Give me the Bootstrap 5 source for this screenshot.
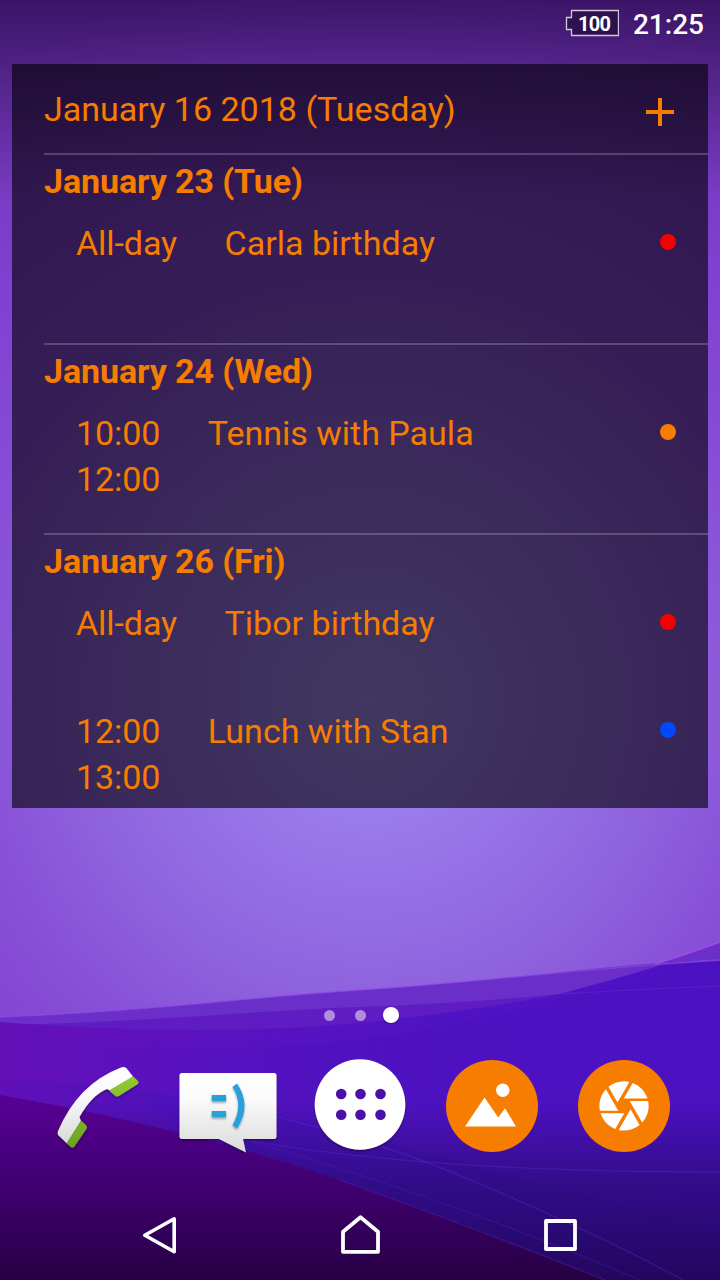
<!DOCTYPE html>
<html lang="en">
<head>
<meta charset="utf-8">
<meta name="viewport" content="width=device-width, initial-scale=1">
<title>Home screen</title>
<link href="https://cdn.jsdelivr.net/npm/bootstrap@5.3.0/dist/css/bootstrap.min.css" rel="stylesheet">
<style>
  body { font-family: Roboto, sans-serif; background: #3f1768; }
  .phone { width: 720px; height: 1280px; }
  .wallpaper { z-index: 0; }
  .front { z-index: 1; }
  .statusbar { height: 48px; padding-right: 16px; gap: 14px; }
  .battery { width: 54px; height: 28px; margin-top: -2px; }
  .clock { font-size: 28px; font-weight: 500; line-height: 48px; padding-top: 2px; }
  .agenda { margin: 16px 12px 0; height: 744px; background: rgba(0,0,0,.6); color: #f77d00; font-size: 34px; }
  .agenda-head { height: 89px; padding: 3px 34px 0 32px; }
  .agenda-head span { line-height: 86px; height: 88px; letter-spacing: .02px; }
  .agenda-head svg { margin-top: 3px; }
  .day { margin-left: 32px; border-top: 2px solid rgba(255,255,255,.2); height: 190px; }
  .day:last-child { height: auto; }
  .day-name { font-size: 34px; font-weight: 700; line-height: 52px; height: 54px; margin: 0; letter-spacing: -.09px; }
  .event { height: 108px; padding: 11px 32px 0 32px; gap: 47.5px; line-height: 46px; }
  .event > span:first-child { letter-spacing: -.08px; }
  .marker { width: 16px; height: 16px; margin-top: 14px; }
  .pager { height: 16px; margin-top: 199px; gap: 20px; padding-left: 2px; }
  .page-dot { width: 11px; height: 11px; background: rgba(255,255,255,.5); }
  .page-dot.on { width: 16px; height: 16px; background: #fff; margin-left: -3px; box-shadow: 0 1px 2px rgba(0,0,0,.3); }
  .dock { height: 120px; margin-top: 23px; padding: 0 30px; }
  .dock svg { width: 132px; height: 120px; }
  .navkeys { height: 90px; padding: 0 60px; margin-top: 24px; }
  .navkeys svg { width: 200px; height: 90px; }
</style>
</head>
<body>
<div class="phone position-relative overflow-hidden">
  <svg class="wallpaper position-absolute top-0 start-0" width="720" height="1280" viewBox="0 0 720 1280" aria-hidden="true">
    <defs>
      <radialGradient id="glow" gradientUnits="userSpaceOnUse" cx="370" cy="700" r="740">
        <stop offset="0" stop-color="#a28cf0"/><stop offset=".2" stop-color="#9877e8"/>
        <stop offset=".4" stop-color="#8f62de"/><stop offset=".57" stop-color="#864dd6"/><stop offset=".75" stop-color="#8040d0"/><stop offset="1" stop-color="#6e35b2"/>
      </radialGradient>
      <linearGradient id="shade" x1="0" y1="0" x2="0" y2="1">
        <stop offset="0" stop-color="#1c0038" stop-opacity=".62"/><stop offset=".35" stop-color="#1c0038" stop-opacity=".36"/><stop offset="1" stop-color="#1c0038" stop-opacity="0"/>
      </linearGradient>
      <linearGradient id="wave" x1="0" y1="0" x2="1" y2="0">
        <stop offset="0" stop-color="#650fb8"/><stop offset=".3" stop-color="#5a12c0"/><stop offset=".6" stop-color="#5013c4"/><stop offset="1" stop-color="#4c12c4"/>
      </linearGradient>
      <linearGradient id="floor" gradientUnits="userSpaceOnUse" x1="0" y1="1090" x2="0" y2="1280">
        <stop offset="0" stop-color="#5a0098"/><stop offset=".45" stop-color="#420075"/><stop offset="1" stop-color="#270044"/>
      </linearGradient>
      <linearGradient id="dusk" gradientUnits="userSpaceOnUse" x1="0" y1="1100" x2="0" y2="1280">
        <stop offset="0" stop-color="#200860" stop-opacity="0"/><stop offset=".45" stop-color="#200860" stop-opacity=".55"/><stop offset="1" stop-color="#200658" stop-opacity=".94"/>
      </linearGradient>
      <linearGradient id="fold" x1="0" y1="0" x2="1" y2="0">
        <stop offset="0" stop-color="#4b10be" stop-opacity="0"/><stop offset=".5" stop-color="#4b10be" stop-opacity=".5"/><stop offset="1" stop-color="#4b10be" stop-opacity=".6"/>
      </linearGradient>
      <linearGradient id="fold2" x1="0" y1="0" x2="1" y2="0">
        <stop offset="0" stop-color="#3b10b4" stop-opacity=".08"/><stop offset=".3" stop-color="#3b10b4" stop-opacity=".35"/><stop offset="1" stop-color="#3b10b4" stop-opacity=".35"/>
      </linearGradient>
    </defs>
    <rect width="720" height="1280" fill="url(#glow)"/>
    <rect width="720" height="200" fill="url(#shade)"/>
    <path d="M0 1017C150 1011 240 998 360 990S600 967 660 963Q690 953 720 942V1280H0Z" fill="#692fc8"/>
    <path d="M0 1025C150 1022 250 1011 360 1007Q470 1003 560 994Q610 981 665 964L720 961V1280H0Z" fill="#5e1cc2"/>
    <path d="M0 1022C180 1036 320 1030 420 1016Q500 1006 560 994Q610 981 665 964L720 961V1280H0Z" fill="url(#wave)"/>
    <path d="M0 1032C180 1056 320 1050 420 1030Q580 998 690 964L720 961V1280H0Z" fill="url(#fold)"/>
    <path d="M560 994Q640 989 720 986" fill="none" stroke="#6028cc" stroke-opacity=".6"/>
    <path d="M0 1017C150 1011 240 998 360 990S600 967 720 960" fill="none" stroke="#9448ec" stroke-opacity=".6" stroke-width="1.5"/>
    <path d="M655 964Q690 953 720 942" fill="none" stroke="#a44cec" stroke-opacity=".8" stroke-width="1.8"/>
    <path d="M0 1080Q170 1082 360 1136L720 1230V1280H0Z" fill="url(#fold2)"/>
    <rect y="1100" width="720" height="180" fill="url(#dusk)"/>
    <path d="M0 1095Q200 1130 360 1187Q480 1230 605 1280H0Z" fill="url(#floor)"/>
    <g fill="none" stroke="#6234d4" stroke-opacity=".3" stroke-width="1.3">
      <path d="M250 1141Q430 1172 720 1172"/>
      <path d="M270 1115Q390 1144 480 1184Q600 1235 683 1280"/>
      <path d="M250 1141Q450 1199 640 1280" stroke-opacity=".2"/>
      <path d="M340 1180Q480 1230 605 1280"/>
    </g>
  </svg>

  <div class="front position-relative d-flex flex-column">
    <header class="statusbar d-flex align-items-center justify-content-end text-white">
      <svg class="battery" viewBox="565 9 54 28" role="img" aria-label="Battery 100">
        <path d="M571.5 10.5H618.5V35.5H571.5V29.5H566.5V17.5H571.5Z" fill="#2d1250" stroke="#d2c8dc" stroke-width="1.3"/>
        <text x="594.5" y="30.5" text-anchor="middle" font-family="Roboto, sans-serif" font-weight="700" font-size="20" textLength="33" fill="#fff">100</text>
      </svg>
      <span class="clock">21:25</span>
    </header>

    <main class="agenda">
      <div class="agenda-head d-flex align-items-center justify-content-between">
        <span>January 16 2018 (Tuesday)</span>
        <svg width="28" height="28" viewBox="0 0 28 28" role="img" aria-label="Add"><path d="M14 0V28M0 14H28" stroke="#f77d00" stroke-width="4"/></svg>
      </div>
      <section class="day">
        <h2 class="day-name">January 23 (Tue)</h2>
        <div class="event d-flex align-items-start"><span>All-day</span><span>Carla birthday</span><i class="marker rounded-circle ms-auto" style="background:#f40000"></i></div>
      </section>
      <section class="day">
        <h2 class="day-name">January 24 (Wed)</h2>
        <div class="event d-flex align-items-start"><span>10:00<br>12:00</span><span>Tennis with Paula</span><i class="marker rounded-circle ms-auto" style="background:#f77d00"></i></div>
      </section>
      <section class="day">
        <h2 class="day-name">January 26 (Fri)</h2>
        <div class="event d-flex align-items-start"><span>All-day</span><span>Tibor birthday</span><i class="marker rounded-circle ms-auto" style="background:#f40000"></i></div>
        <div class="event d-flex align-items-start"><span>12:00<br>13:00</span><span>Lunch with Stan</span><i class="marker rounded-circle ms-auto" style="background:#0048ff"></i></div>
      </section>
    </main>

    <div class="pager d-flex align-items-center justify-content-center">
      <span class="page-dot rounded-circle"></span><span class="page-dot rounded-circle"></span><span class="page-dot on rounded-circle"></span>
    </div>

    <nav class="dock d-flex">
      <svg viewBox="30 1046 132 120" role="img" aria-label="Phone">
        <defs>
          <linearGradient id="paper" x1="0" y1="0" x2="0" y2="1"><stop offset="0" stop-color="#fff"/><stop offset=".35" stop-color="#fafafa"/><stop offset="1" stop-color="#dadada"/></linearGradient>
          <linearGradient id="lime" gradientUnits="userSpaceOnUse" x1="0" y1="1075" x2="0" y2="1148"><stop offset="0" stop-color="#93cc34"/><stop offset="1" stop-color="#6ea022"/></linearGradient>
          <filter id="drop" x="-20%" y="-20%" width="140%" height="150%"><feDropShadow dx="0" dy="1.5" stdDeviation="1.3" flood-opacity=".4"/></filter>
        </defs>
        <g filter="url(#drop)">
          <path d="M121 1067.500Q124 1066 126.500 1068.300L133 1076.500L111 1091L107 1089Q92 1095 79.500 1117L81 1121L67 1143.500L58 1135Q57 1133.500 58 1131Q78 1084 121 1067.500Z" fill="url(#paper)"/>
          <path d="M133 1076.200L138 1081Q139.300 1082.500 138 1084L119 1096Q117 1097 115.300 1096L109 1090.500ZM81 1120.500L86.500 1125.500Q87.500 1127 86.500 1129L74.500 1146.500Q73 1148.500 71 1147.300L66.500 1143.200Z" fill="url(#lime)"/>
        </g>
      </svg>
      <svg viewBox="162 1046 132 120" role="img" aria-label="Messages">
        <g filter="url(#drop)"><path d="M182 1073H274Q276.500 1073 276.500 1075.500V1136.500Q276.500 1139 274 1139H243L246 1152.500L219 1139H182Q179.500 1139 179.500 1136.500V1075.500Q179.500 1073 182 1073Z" fill="url(#paper)"/></g>
        <g filter="url(#drop)" fill="#2ba0db"><path d="M211.700 1095H226V1101.300H211.700ZM211.700 1111H226V1117.300H211.700Z"/><path d="M232.500 1087L237 1083.500Q252 1105 237 1128.500L232.500 1125Q244 1105 232.500 1087Z"/></g>
      </svg>
      <svg viewBox="294 1046 132 120" role="img" aria-label="All apps">
        <circle cx="360" cy="1104.500" r="45.300" fill="#fff" filter="url(#drop)"/>
        <g fill="#4b10aa"><circle cx="341.200" cy="1094" r="5.300"/><circle cx="360.500" cy="1094" r="5.300"/><circle cx="380.500" cy="1094" r="5.300"/><circle cx="341.200" cy="1114.700" r="5.300"/><circle cx="360.500" cy="1114.700" r="5.300"/><circle cx="380.500" cy="1114.700" r="5.300"/></g>
      </svg>
      <svg viewBox="426 1046 132 120" role="img" aria-label="Album">
        <circle cx="492" cy="1106" r="46" fill="#f77d00"/>
        <circle cx="502.800" cy="1090.300" r="6.700" fill="#fff"/>
        <path d="M465 1126.500L484.500 1097.500L498.300 1117.500L505 1108.300L516 1126.500Z" fill="#fff"/>
      </svg>
      <svg viewBox="558 1046 132 120" role="img" aria-label="Camera">
        <circle cx="624" cy="1106" r="46" fill="#f77d00"/>
        <path transform="translate(594.500 1076.400) scale(2.46)" fill="#fff" d="M9.400 10.500l4.770-8.260C13.470 2.090 12.750 2 12 2c-2.400 0-4.600.85-6.320 2.250l3.660 6.350.06-.1zM21.540 9c-.92-2.920-3.150-5.260-6-6.340L11.880 9h9.660zm.26 1h-7.490l.29.5 4.760 8.250C21 16.970 22 14.610 22 12c0-.69-.07-1.350-.2-2zM8.540 12l-3.900-6.750C3.010 7.030 2 9.390 2 12c0 .69.07 1.350.2 2h7.490l-1.150-2zm-6.080 3c.92 2.920 3.150 5.260 6 6.340L12.120 15H2.460zm11.270 0l-3.900 6.760c.7.15 1.420.24 2.170.24 2.400 0 4.600-.85 6.320-2.250l-3.660-6.350-.93 1.600z"/>
      </svg>
    </nav>

    <nav class="navkeys d-flex">
      <svg viewBox="60 1190 200 90" fill="none" stroke="#fff" stroke-width="3.600" stroke-linejoin="round" role="img" aria-label="Back"><path d="M174.200 1218.800V1251.800L144.800 1235.300Z"/></svg>
      <svg viewBox="260 1190 200 90" fill="none" stroke="#fff" stroke-width="3.800" stroke-linejoin="round" role="img" aria-label="Home"><path d="M343 1251.800V1231.700L360.500 1217.200L378 1231.700V1251.800Z"/></svg>
      <svg viewBox="460 1190 200 90" fill="none" stroke="#fff" stroke-width="3.800" stroke-linejoin="round" role="img" aria-label="Recent apps"><rect x="546" y="1221" width="29" height="28"/></svg>
    </nav>
  </div>
</div>
<script src="https://cdn.jsdelivr.net/npm/bootstrap@5.3.0/dist/js/bootstrap.bundle.min.js"></script>
</body>
</html>
